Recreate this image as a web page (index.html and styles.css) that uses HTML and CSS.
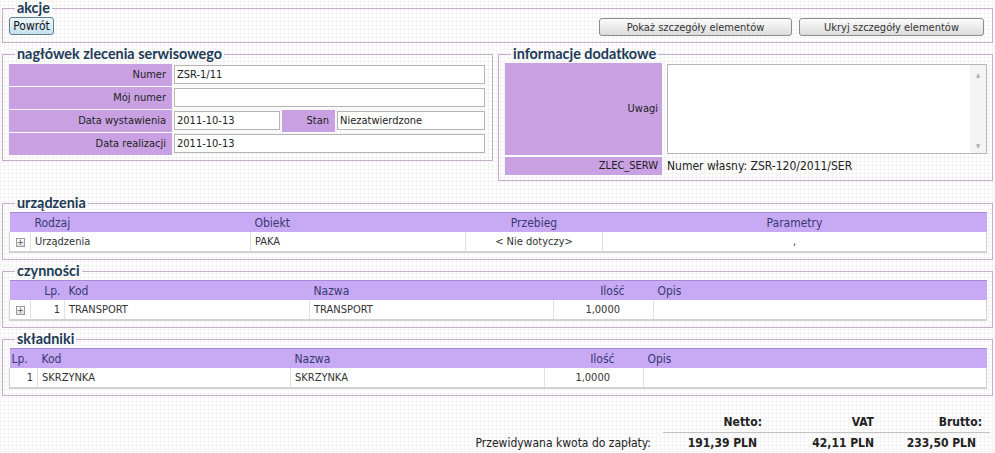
FILE: index.html
```html
<!DOCTYPE html>
<html lang="pl">
<head>
    <meta charset="UTF-8">
    <title>Zlecenie serwisowe</title>
    <link rel="stylesheet" href="styles.css">
</head>
<body>
    <fieldset class="box akcje">
        <legend>akcje</legend>
        <div class="actions">
            <button class="btn btn-back">Powrót</button>
            <div class="actions-right">
                <button class="btn btn-grey btn-show">Pokaż szczegóły elementów</button>
                <button class="btn btn-grey btn-hide">Ukryj szczegóły elementów</button>
            </div>
        </div>
    </fieldset>

    <div class="top-row">
        <fieldset class="box header-box">
            <legend>nagłówek zlecenia serwisowego</legend>
            <div class="form-grid">
                <div class="lbl">Numer</div>
                <div class="val"><input class="field" type="text" value="ZSR-1/11"></div>

                <div class="lbl">Mój numer</div>
                <div class="val"><input class="field" type="text" value=""></div>

                <div class="lbl">Data wystawienia</div>
                <div class="val val-split">
                    <input class="field field-date" type="text" value="2011-10-13">
                    <div class="lbl lbl-inline">Stan</div>
                    <input class="field" type="text" value="Niezatwierdzone">
                </div>

                <div class="lbl">Data realizacji</div>
                <div class="val"><input class="field" type="text" value="2011-10-13"></div>
            </div>
        </fieldset>

        <fieldset class="box info-box">
            <legend>informacje dodatkowe</legend>
            <div class="info-grid">
                <div class="lbl lbl-tall">Uwagi</div>
                <div class="notes">
                    <div class="notes-text"></div>
                    <div class="notes-scroll">
                        <span class="arrow">&#9650;</span>
                        <span class="arrow">&#9660;</span>
                    </div>
                </div>

                <div class="lbl lbl-short">ZLEC_SERW</div>
                <div class="own-number">Numer własny: ZSR-120/2011/SER</div>
            </div>
        </fieldset>
    </div>

    <fieldset class="box list-box">
        <legend>urządzenia</legend>
        <table class="grid">
            <tr>
                <th class="c-exp"></th>
                <th class="c-rodzaj">Rodzaj</th>
                <th class="c-obiekt">Obiekt</th>
                <th class="c-przebieg center">Przebieg</th>
                <th class="center">Parametry</th>
            </tr>
            <tr>
                <td class="c-exp"><span class="expander">+</span></td>
                <td>Urządzenia</td>
                <td>PAKA</td>
                <td class="center">&lt; Nie dotyczy&gt;</td>
                <td class="center">,</td>
            </tr>
        </table>
    </fieldset>

    <fieldset class="box list-box">
        <legend>czynności</legend>
        <table class="grid">
            <tr>
                <th class="c-exp"></th>
                <th class="c-lp right">Lp.</th>
                <th class="c-kod">Kod</th>
                <th class="c-nazwa">Nazwa</th>
                <th class="c-ilosc qty-head">Ilość</th>
                <th>Opis</th>
            </tr>
            <tr>
                <td class="c-exp"><span class="expander">+</span></td>
                <td class="right">1</td>
                <td>TRANSPORT</td>
                <td>TRANSPORT</td>
                <td class="qty">1,0000</td>
                <td></td>
            </tr>
        </table>
    </fieldset>

    <fieldset class="box list-box">
        <legend>składniki</legend>
        <table class="grid">
            <tr>
                <th class="s-lp">Lp.</th>
                <th class="s-kod">Kod</th>
                <th class="s-nazwa">Nazwa</th>
                <th class="s-ilosc qty-head">Ilość</th>
                <th>Opis</th>
            </tr>
            <tr>
                <td class="right">1</td>
                <td>SKRZYNKA</td>
                <td>SKRZYNKA</td>
                <td class="qty">1,0000</td>
                <td></td>
            </tr>
        </table>
    </fieldset>

    <div class="totals-wrap">
        <table class="totals">
            <tr>
                <td></td>
                <th>Netto:</th>
                <th>VAT</th>
                <th>Brutto:</th>
            </tr>
            <tr>
                <td class="totals-label">Przewidywana kwota do zapłaty:</td>
                <td class="amount">191,39 PLN</td>
                <td class="amount">42,11 PLN</td>
                <td class="amount">233,50 PLN</td>
            </tr>
        </table>
    </div>
</body>
</html>
```

FILE: styles.css
```css
body {
    margin: 0;
    font-family: "DejaVu Sans Condensed", "DejaVu Sans", sans-serif;
    font-size: 11px;
    color: #222;
    background-color: #fefefe;
    background-image:
        repeating-linear-gradient(0deg, #f4f4f4 0, #f4f4f4 1px, transparent 1px, transparent 4px),
        repeating-linear-gradient(90deg, #f4f4f4 0, #f4f4f4 1px, transparent 1px, transparent 4px);
}
.box {
    margin: 0 2px 3px 2px;
    padding: 0 5px 6px 6px;
    border: 1px solid #c4adc6;
    min-width: 0;
}
.box legend {
    margin-left: 6px;
    padding: 0 2px;
    font-family: Lato, "DejaVu Sans", sans-serif;
    font-weight: bold;
    font-size: 14.4px;
    line-height: 16px;
    color: #1d3a56;
}

/* akcje */
.actions {
    display: flex;
    justify-content: space-between;
    align-items: flex-start;
    padding-top: 1px;
}
.actions-right {
    display: flex;
    gap: 7px;
    margin-top: 1px;
    margin-right: 3px;
}
.btn {
    font-family: "DejaVu Sans Condensed", "DejaVu Sans", sans-serif;
    font-size: 11px;
    color: #111;
    height: 18px;
    padding: 0 4px;
    border-radius: 3px;
    cursor: pointer;
}
.btn-back {
    width: 45px;
    font-size: 12px;
    padding: 0 2px;
    border: 1px solid #5f7f90;
    background: linear-gradient(#eef8fc, #c6e0ec);
}
.btn-grey {
    border: 1px solid #8a8a8a;
    background: linear-gradient(#fbfbfb, #dcdcdc);
    color: #333;
}
.btn-show { width: 193px; }
.btn-hide { width: 185px; }

/* naglowek + informacje */
.top-row {
    display: flex;
    align-items: flex-start;
    gap: 1px;
    margin-bottom: 11px;
}
.header-box {
    width: 476px;
    flex: none;
    padding-top: 2px;
    padding-right: 7px;
    padding-bottom: 5px;
}
.info-box {
    flex: 1;
    padding-top: 1px;
    padding-bottom: 5px;
}
.form-grid {
    display: grid;
    grid-template-columns: 163px 1fr;
    column-gap: 2px;
    row-gap: 1px;
}
.lbl {
    background: #c9a1e3;
    height: 22px;
    line-height: 22px;
    text-align: right;
    padding-right: 6px;
}
.val {
    height: 22px;
}
.val-split {
    display: flex;
    gap: 2px;
}
.lbl-inline {
    width: 47px;
    flex: none;
}
.field {
    box-sizing: border-box;
    width: 100%;
    height: 19px;
    margin: 1px 0 0 0;
    padding: 0 2px;
    border: 1px solid #b4b4b4;
    background: #fff;
    font-family: "DejaVu Sans Condensed", "DejaVu Sans", sans-serif;
    font-size: 11px;
    color: #222;
}
.field-date {
    width: 106px;
    flex: none;
}
.val-split .field:last-child {
    flex: 1;
}
.info-grid {
    display: grid;
    grid-template-columns: 157px 1fr;
    column-gap: 5px;
    row-gap: 2px;
}
.lbl-tall {
    height: 92px;
    line-height: 92px;
    padding-right: 4px;
}
.lbl-short {
    height: 18px;
    line-height: 18px;
    padding-right: 4px;
}
.notes {
    display: flex;
    height: 88px;
    margin-top: 1px;
    border: 1px solid #b8b8b8;
    background: #fff;
}
.notes-text {
    flex: 1;
}
.notes-scroll {
    width: 16px;
    display: flex;
    flex-direction: column;
    justify-content: space-between;
    align-items: center;
    background: #f4f4f4;
    padding: 6px 0 4px;
}
.arrow {
    font-size: 6px;
    color: #b0b0b0;
}
.own-number {
    font-family: "DejaVu Sans Condensed", "DejaVu Sans", sans-serif;
    font-size: 12px;
    line-height: 18px;
    color: #222;
}

/* tabele */
.list-box {
    padding-top: 1px;
}
.grid {
    width: 100%;
    border-collapse: collapse;
    table-layout: fixed;
}
.grid th {
    background: #c8a9f4;
    border-top: 1px solid #a888d6;
    height: 19px;
    padding: 0 4px;
    font-weight: normal;
    font-size: 12px;
    color: #363a70;
    text-align: left;
}
.grid td {
    background: #fff;
    height: 19px;
    padding: 0 4px;
    border-left: 1px solid #e2e2e2;
    border-bottom: 2px solid #d2d2d2;
    color: #333;
    white-space: nowrap;
}
.grid td:first-child {
    border-left: 1px solid #d2d2d2;
}
.grid td:last-child {
    border-right: 1px solid #d2d2d2;
}
.grid .center { text-align: center; }
.grid .right { text-align: right; }
.grid .qty {
    text-align: right;
    padding-right: 33px;
}
.grid .qty-head {
    text-align: right;
    padding-right: 29px;
}
.c-exp { width: 13px; }
.c-rodzaj { width: 212px; }
.c-obiekt { width: 207px; }
.c-przebieg { width: 129px; }
.c-lp { width: 26px; }
.c-kod { width: 237px; }
.c-nazwa { width: 236px; }
.c-ilosc { width: 67px; }
.s-lp { width: 24px; }
.s-kod { width: 245px; }
.s-nazwa { width: 246px; }
.s-ilosc { width: 66px; }
.grid th.s-lp { padding: 0 2px; }
.grid td.c-exp { padding-left: 6px; padding-right: 2px; }
.expander {
    display: inline-block;
    width: 7px;
    height: 7px;
    border: 1px solid #9a9a9a;
    background: linear-gradient(#fdfdfd, #e0e0e0);
    font-size: 9px;
    line-height: 7px;
    text-align: center;
    color: #555;
    vertical-align: middle;
}

/* podsumowanie */
.totals-wrap {
    display: flex;
    justify-content: flex-end;
    padding: 15px 5px 0 0;
}
.totals {
    border-collapse: collapse;
    font-size: 12px;
}
.totals th {
    text-align: right;
    font-weight: bold;
    padding: 0 8px 3px 0;
    border-bottom: 1px solid #c4c4c4;
    height: 15px;
}
.totals th:nth-child(2) { width: 99px; padding-right: 8px; }
.totals th:nth-child(3) { width: 104px; padding-right: 4px; }
.totals th:nth-child(4) { width: 104px; padding-right: 8px; }
.totals td {
    padding: 3px 0 0 0;
}
.totals-label {
    padding-right: 12px !important;
}
.totals .amount {
    text-align: right;
    font-weight: bold;
}
.totals .amount:nth-child(2) { padding-right: 13px; }
.totals .amount:nth-child(3) { padding-right: 4px; }
.totals .amount:nth-child(4) { padding-right: 14px; }
```
